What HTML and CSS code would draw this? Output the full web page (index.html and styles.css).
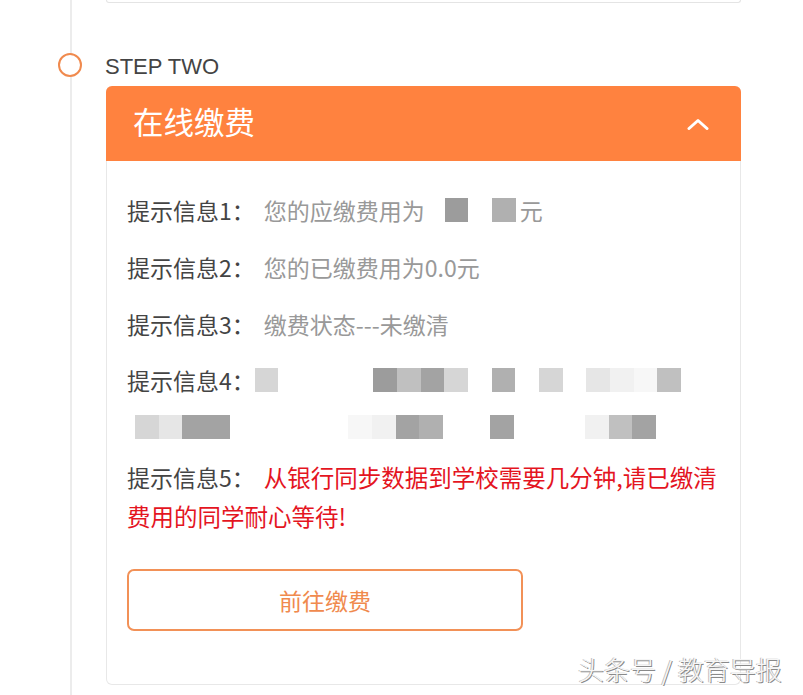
FILE: index.html
```html
<!DOCTYPE html>
<html lang="zh">
<head>
<meta charset="utf-8">
<title>在线缴费</title>
<link rel="stylesheet" href="styles.css">
</head>
<body>
<div class="timeline">
  <div class="prev-card"></div>
  <div class="step">
    <span class="marker"></span>
    <span class="step-title">STEP TWO</span>
  </div>
  <div class="card">
    <div class="card-head">
      <span class="card-title">在线缴费</span>
      <svg class="chevron" width="22" height="12" viewBox="0 0 22 12"><polyline points="2,10.5 11,2.5 20,10.5" fill="none" stroke="#fff" stroke-width="3" stroke-linecap="round" stroke-linejoin="round"/></svg>
    </div>
    <div class="card-body">
      <div class="row r1">
        <span class="label">提示信息1：</span><span class="value">您的应缴费用为</span><span class="cells c1"><span class="px d2"></span><span class="px"></span><span class="px d4"></span></span><span class="value unit">元</span>
      </div>
      <div class="row r2">
        <span class="label">提示信息2：</span><span class="value">您的已缴费用为0.0元</span>
      </div>
      <div class="row r3">
        <span class="label">提示信息3：</span><span class="value">缴费状态---未缴清</span>
      </div>
      <div class="row r4">
        <span class="label">提示信息4：</span><span class="cells c4"><span class="px d6"></span><span class="px"></span><span class="px"></span><span class="px"></span><span class="px"></span><span class="px d2"></span><span class="px d5"></span><span class="px d3"></span><span class="px d6"></span><span class="px"></span><span class="px d4"></span><span class="px"></span><span class="px d6"></span><span class="px"></span><span class="px d7"></span><span class="px d8"></span><span class="px d9"></span><span class="px d5"></span></span>
      </div>
      <div class="row r4b">
        <span class="cells c4b"><span class="px d6"></span><span class="px d7"></span><span class="px d3"></span><span class="px d3"></span><span class="px"></span><span class="px"></span><span class="px"></span><span class="px"></span><span class="px"></span><span class="px d9"></span><span class="px d8"></span><span class="px d3"></span><span class="px d4"></span><span class="px"></span><span class="px"></span><span class="px d3"></span><span class="px"></span><span class="px"></span><span class="px"></span><span class="px d8"></span><span class="px d5"></span><span class="px d3"></span></span>
      </div>
      <div class="r5">
        <div class="row r5a"><span class="label">提示信息5：</span><span class="warn">从银行同步数据到学校需要几分钟,请已缴清</span></div>
        <div class="row r5b"><span class="warn cont">费用的同学耐心等待!</span></div>
      </div>
      <button class="pay-btn" type="button">前往缴费</button>
    </div>
  </div>
</div>
<div class="watermark">头条号 / 教育导报</div>
</body>
</html>
```
FILE: styles.css
```css
html, body {
  margin: 0;
  padding: 0;
  background: #fff;
}
body {
  width: 803px;
  height: 695px;
  overflow: hidden;
  position: relative;
  font-family: "Noto Sans CJK SC", "Noto Sans", sans-serif;
}
.timeline {
  margin-left: 70px;
  border-left: 2px solid #ececec;
  padding-left: 34px;
  height: 695px;
  box-sizing: border-box;
  width: 671px;
}
.prev-card {
  height: 2px;
  border: 1px solid #e4e4e4;
  border-top: none;
  border-radius: 0 0 6px 6px;
  width: 633px;
}
.step {
  position: relative;
  height: 83px;
  display: flex;
  align-items: flex-end;
}
.marker {
  position: absolute;
  left: -48px;
  top: 50px;
  width: 20px;
  height: 20px;
  border: 2px solid #f08a4e;
  border-radius: 50%;
  background: #fff;
}
.step-title {
  font-family: "Liberation Sans", Arial, sans-serif;
  font-size: 22px;
  color: #444;
  line-height: 24px;
  margin-bottom: 7px;
  margin-left: -1px;
}
.card {
  width: 633px;
  border: 1px solid #e8e8e8;
  border-top: none;
  border-radius: 6px;
  box-sizing: content-box;
}
.card-head {
  background: #ff823f;
  height: 75px;
  border-radius: 6px 6px 0 0;
  margin: 0 -1px;
  display: flex;
  align-items: center;
  justify-content: space-between;
  padding: 0 32px 0 27px;
}
.card-title {
  color: #fff;
  font-size: 30.5px;
  line-height: 40px;
  margin-top: -5px;
}
.chevron {
  display: block;
  margin-top: 1px;
}
.card-body {
  padding: 29px 20px 53px 20px;
}
.row {
  display: flex;
  align-items: center;
  font-size: 23px;
  line-height: 40px;
  height: 40px;
  white-space: nowrap;
}
.r1, .r2 { margin-bottom: 17px; }
.r3 { margin-bottom: 12px; }
.r4, .r4b { height: 47px; }
.r4b { margin-bottom: 8px; }
.label { color: #444; }
.value { color: #999; margin-left: 9px; }
.value.unit { margin-left: 0; }
.cells {
  display: flex;
}
.c1 { margin-left: 20px; margin-right: 4px; }
.c4 { margin-left: 0; }
.c4b { margin-left: 8px; }
.px {
  display: block;
  width: 23.7px;
  height: 24px;
}
.d2 { background: #9c9c9c; }
.d3 { background: #a3a3a3; }
.d4 { background: #b0b0b0; }
.d5 { background: #c0c0c0; }
.d6 { background: #d6d6d6; }
.d7 { background: #e6e6e6; }
.d8 { background: #f1f1f1; }
.d9 { background: #f7f7f7; }
.r5a, .r5b {
  height: 39px;
  line-height: 39px;
}
.warn {
  color: #e4151f;
  font-size: 23.5px;
  margin-left: 9px;
}
.warn.cont { margin-left: 0; }
.pay-btn {
  display: block;
  margin-top: 33px;
  width: 396px;
  height: 62px;
  border: 2px solid #f29157;
  border-radius: 7px;
  background: #fff;
  color: #f08a4e;
  font-family: "Noto Sans CJK SC", "Noto Sans", sans-serif;
  font-size: 23px;
  padding: 0;
}
.watermark {
  position: absolute;
  left: 578px;
  top: 651px;
  font-size: 26px;
  line-height: 36px;
  color: #f6f6f6;
  text-shadow: 1px 1px 0 #8a8a8a, -1px 0 0 #bdbdbd;
  font-family: "Noto Sans CJK SC", sans-serif;
  font-weight: 300;
}
```
